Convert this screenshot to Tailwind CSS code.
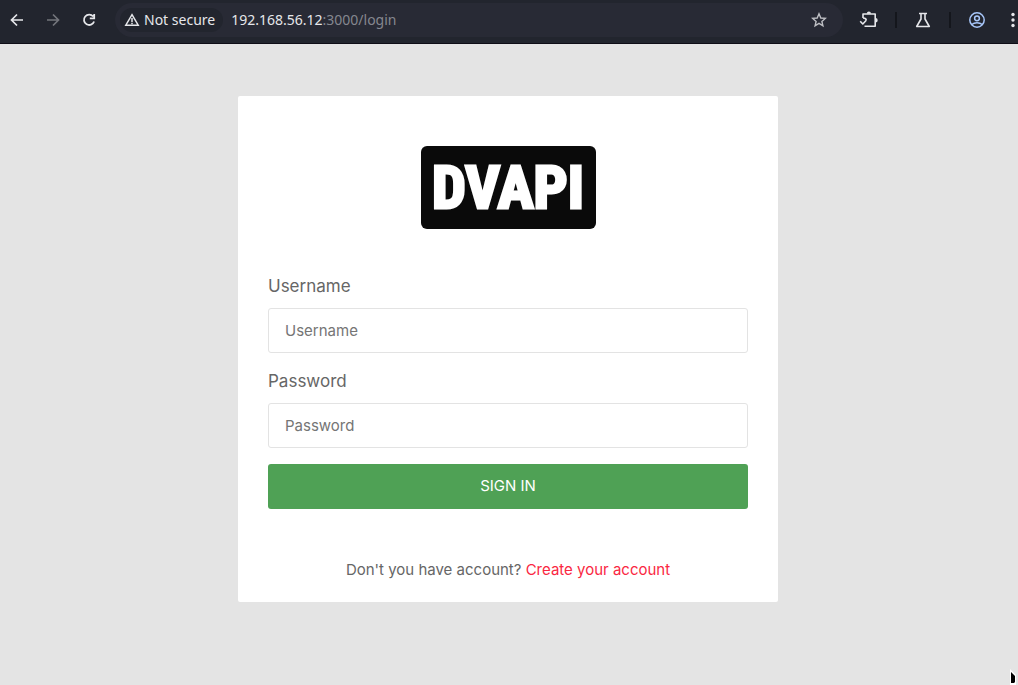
<!DOCTYPE html>
<html lang="en">
<head>
<meta charset="utf-8">
<meta name="viewport" content="width=device-width, initial-scale=1">
<title>DVAPI Login</title>
<script src="https://cdn.jsdelivr.net/npm/@tailwindcss/browser@4"></script>
</head>
<body class="relative flex min-h-screen flex-col overflow-x-hidden bg-[#e4e4e4] font-['Inter',sans-serif] text-[#666666]">
<header class="flex h-11 items-center border-b border-[#0e0d16] bg-[#22252e] pb-1 pl-[7px] font-['Noto_Sans',sans-serif] text-sm text-[#e6e7ea]">
  <nav class="flex items-center gap-4" aria-label="Browser navigation">
    <button type="button" aria-label="Back" class="flex size-5 items-center justify-center"><svg class="size-[18px]" viewBox="0 0 18 18" fill="none" stroke="#e6e7ea" stroke-width="1.7"><path d="M15 9H4M9 3.5L3.5 9L9 14.5"/></svg></button>
    <button type="button" aria-label="Forward" class="flex size-5 items-center justify-center"><svg class="size-[18px]" viewBox="0 0 18 18" fill="none" stroke="#73757b" stroke-width="1.7"><path d="M3 9h11M9 3.5L14.5 9L9 14.5"/></svg></button>
    <button type="button" aria-label="Reload" class="flex size-5 items-center justify-center"><svg class="size-[18px]" viewBox="0 0 18 18" fill="none" stroke="#e6e7ea" stroke-width="1.8"><path d="M13.2 5.5A5.2 5.2 0 1 0 14.1 10.5M14.2 3v4.3H9.8"/></svg></button>
  </nav>
  <div class="ml-4 flex h-[34px] min-w-0 flex-1 items-center rounded-full bg-[#282a35] pr-4 pl-[5px]">
    <button type="button" class="flex h-6 items-center gap-1 rounded-full bg-[#22252e] px-1 whitespace-nowrap">
      <svg class="size-4" viewBox="0 0 16 16" fill="none" stroke="#e6e7ea" stroke-width="1.5"><path d="M8 2.7L14.2 13.2H1.8Z"/><path d="M8 6v4M8 10.8v1.4"/></svg>
      <span class="pr-1">Not secure</span>
    </button>
    <div class="ml-2 flex-1 truncate">192.168.56.12<span class="text-[#85878f]">:3000/login</span></div>
    <button type="button" aria-label="Bookmark" class="flex items-center"><svg class="size-4" viewBox="0 0 16 16" fill="none" stroke="#bfc0c5" stroke-width="1.4"><path d="M8 1.8l1.8 4.2 4.5.4-3.4 3 1 4.4L8 11.4l-3.9 2.4 1-4.4-3.4-3 4.5-.4z"/></svg></button>
  </div>
  <div class="ml-4 flex shrink-0 items-center gap-4">
    <button type="button" aria-label="Extensions" class="flex"><svg class="size-5" viewBox="0 0 20 20"><path d="M4 8V4h12.200v12.300H5.500M1.200 11.200L3.800 14L7.300 10.200" fill="none" stroke="#e6e7ea" stroke-width="1.600" stroke-linejoin="round"/><path d="M4 8c2 0 3.300.8 3.300 2.300" fill="none" stroke="#e6e7ea" stroke-width="1.500"/><path d="M7.800 3.700a2.100 2.100 0 0 1 4.200 0zM16.500 8.100a2.200 2.200 0 0 1 0 4.400z" fill="#e6e7ea"/></svg></button>
    <span class="h-4 w-0.5 bg-[#14161c]"></span>
    <button type="button" aria-label="Experiments" class="flex"><svg class="size-5" viewBox="0 0 20 20" fill="none" stroke="#e6e7ea" stroke-width="1.6" stroke-linejoin="round"><path d="M6 3.5h8M8 4v5L3.700 16.500h12.600L12 9V4"/></svg></button>
    <span class="h-4 w-0.5 bg-[#14161c]"></span>
    <button type="button" aria-label="Profile" class="flex"><svg class="size-5" viewBox="0 0 20 20" fill="none" stroke="#a8c7fa" stroke-width="1.5"><circle cx="10" cy="10" r="7.2"/><circle cx="10" cy="8.3" r="2.4"/><path d="M4.700 14.500c3-2.500 7.600-2.500 10.600 0"/></svg></button>
    <button type="button" aria-label="Menu" class="flex"><svg class="h-5 w-[15px]" viewBox="0 0 15 20" fill="#e6e7ea"><circle cx="10" cy="4.5" r="1.7"/><circle cx="10" cy="10" r="1.7"/><circle cx="10" cy="15.5" r="1.7"/></svg></button>
  </div>
</header>
<main class="flex flex-1 items-start justify-center pt-[52px] pr-0.5 pb-8">
  <form class="flex w-full max-w-[540px] flex-col rounded-xs bg-white px-[30px] pt-[50px] pb-5">
    <h1 class="flex h-[83px] w-[175px] items-center justify-center self-center rounded-md bg-[#0a0a0a] font-['Roboto_Condensed','Roboto',sans-serif] text-[60px] leading-none font-bold text-white [-webkit-text-stroke:3px_white]">DVAPI</h1>
    <label for="username" class="mt-[45px] text-[17px] leading-6">Username</label>
    <input id="username" type="text" placeholder="Username" class="mt-[10px] h-[45px] w-full rounded-[3px] border border-[#e3e3e3] bg-white px-4 text-[15px] outline-none placeholder:text-[#757575]">
    <label for="password" class="mt-4 text-[17px] leading-6">Password</label>
    <input id="password" type="password" placeholder="Password" class="mt-[10px] h-[45px] w-full rounded-[3px] border border-[#e3e3e3] bg-white px-4 text-[15px] outline-none placeholder:text-[#757575]">
    <button type="submit" class="mt-4 h-[45px] w-full rounded-[3px] bg-[#4fa155] text-[15px] text-white">SIGN IN</button>
    <p class="mt-[49px] text-center text-[15px] leading-6">Don't you have account? <a href="#" class="text-[#fa2742]">Create your account</a></p>
  </form>
</main>
<svg class="absolute right-0 bottom-0 h-4 w-2" viewBox="0 0 8 16" aria-hidden="true"><path d="M0 0L6 6V16H0Z" fill="white"/><path d="M1 3L5 7V13L4 14H1Z" fill="black"/></svg>
</body>
</html>
